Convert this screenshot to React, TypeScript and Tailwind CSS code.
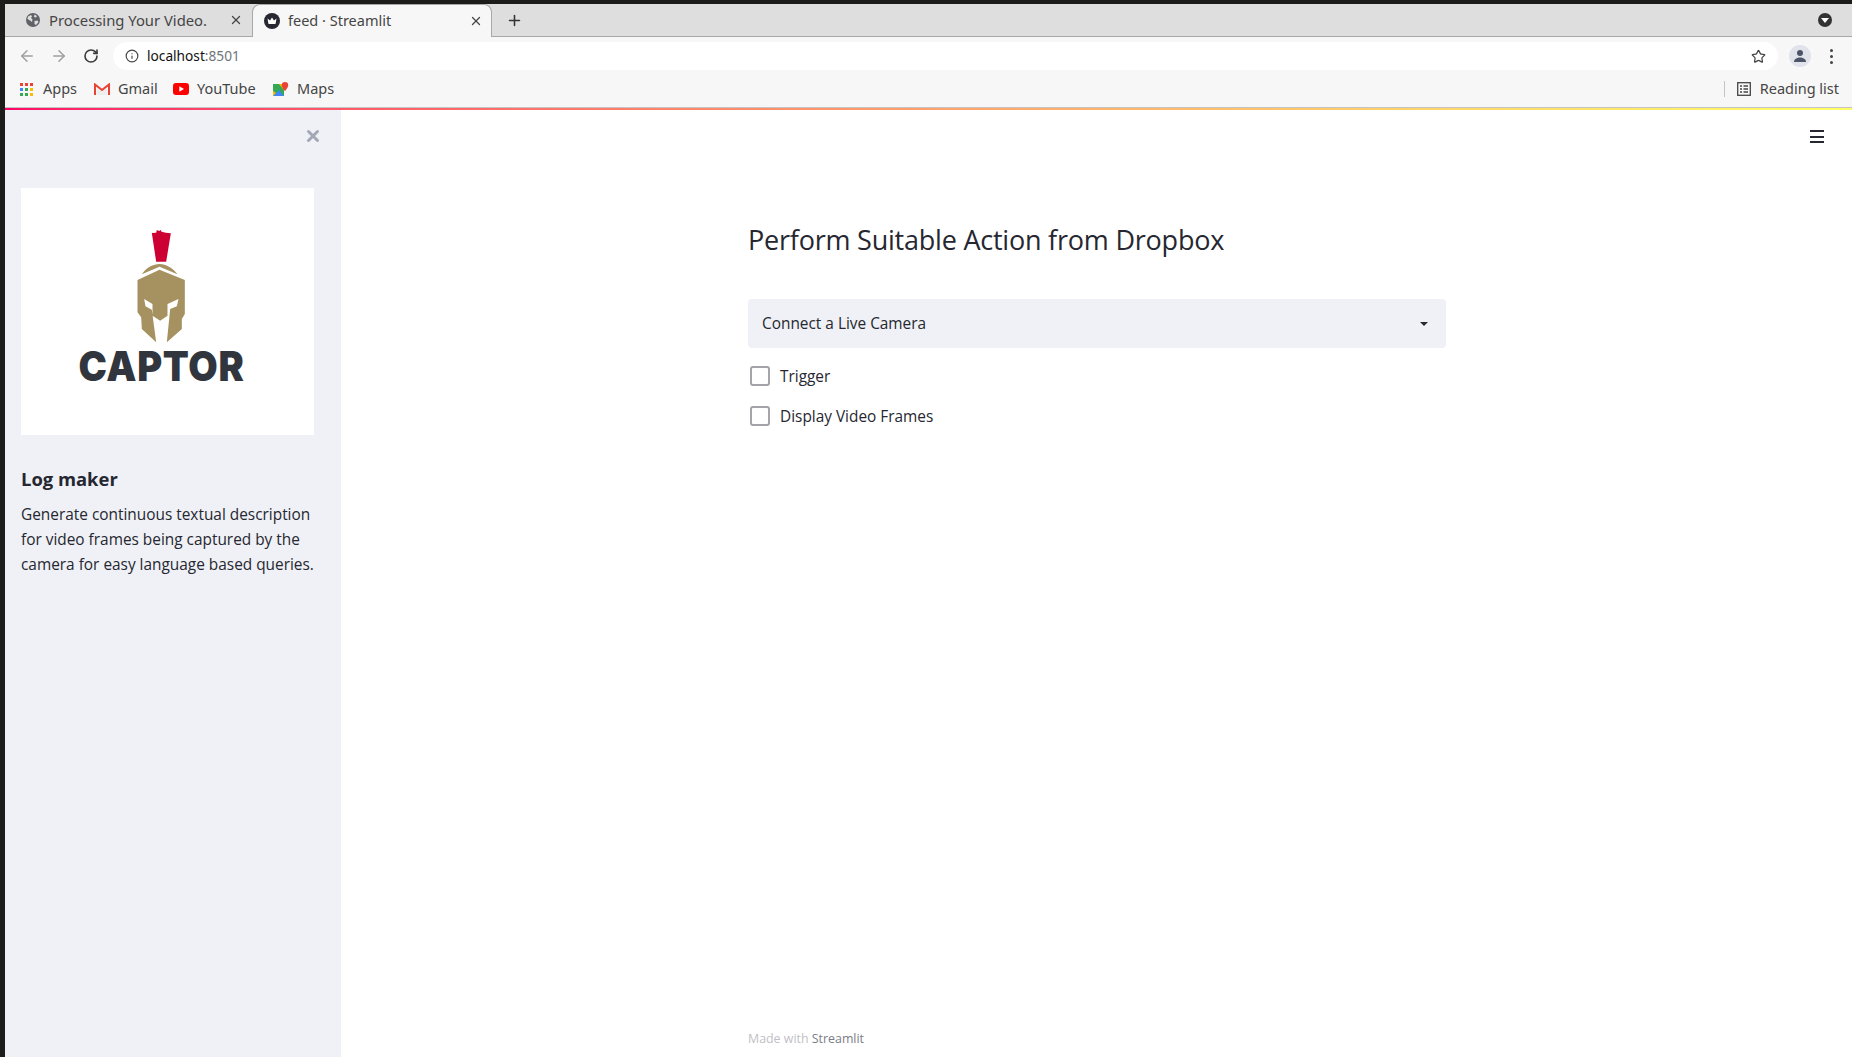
import { ArrowLeft, ArrowRight, Info, Plus, RotateCw, Star, X } from 'lucide-react';

const plex = { fontFamily: '"Open Sans", "Noto Sans", sans-serif' };
const chrome = { fontFamily: '"Noto Sans", sans-serif' };

function Favicon() {
  return (
    <svg width="16" height="16" viewBox="0 0 16 16" className="shrink-0">
      <circle cx="8" cy="8" r="8" fill="#262730" />
      <path d="M3.500 5.500 L6 7.500 L8 4.500 L10 7.500 L12.500 5.500 L11.500 11 H4.500 Z" fill="#fff" />
    </svg>
  );
}

function GlobeIcon() {
  return (
    <svg width="14" height="14" viewBox="0 0 14 14" className="shrink-0">
      <circle cx="7" cy="7" r="7" fill="#5f6368" />
      <path d="M2 3.500 5 2l1 1.500-1 1.500 1.500 1.500L6 9 4 7.500 1.500 6zM8.500 1.500 11 3 10 4.500 8 4zM8.500 8l3-.500 1 1.500-2.500 3L8.500 11z" fill="#dedede" />
    </svg>
  );
}

function AppsIcon() {
  const colors = ['#ea4335', '#ea4335', '#ea4335', '#4285f4', '#34a853', '#fbbc05', '#34a853', '#34a853', '#fbbc05'];
  return (
    <div className="grid h-[13px] w-[13px] shrink-0 grid-cols-3 gap-[2px]">
      {colors.map((c, i) => (
        <div key={i} style={{ backgroundColor: c }} />
      ))}
    </div>
  );
}

function GmailIcon() {
  return (
    <svg width="16" height="13" viewBox="0 0 16 13" className="shrink-0">
      <path d="M3 12V5l5 4 5-4v7z" fill="#eee" />
      <path d="M1 12V1.500L8 7l7-5.500V12" fill="none" stroke="#ea4335" strokeWidth="2" />
    </svg>
  );
}

function YoutubeIcon() {
  return (
    <svg width="16" height="12" viewBox="0 0 16 12" className="shrink-0">
      <rect width="16" height="12" rx="3" fill="#f00" />
      <path d="M6.300 3.200 11 6l-4.700 2.800z" fill="#fff" />
    </svg>
  );
}

function MapsIcon() {
  return (
    <svg width="16" height="15" viewBox="0 0 16 15" className="shrink-0">
      <path d="M0 2h11v12H0z" fill="#34a853" />
      <path d="M0 14 6 8l5 6z" fill="#4285f4" />
      <path d="M0 14V9l3 2z" fill="#fbbc05" />
      <path d="M6 2h5v6z" fill="#fbbc05" />
      <path d="M12 0a3.200 3.200 0 0 1 3.200 3.200C15.200 5.500 12 9 12 9S8.800 5.500 8.800 3.200A3.200 3.200 0 0 1 12 0z" fill="#ea4335" />
    </svg>
  );
}

function Bookmark({ icon, label, className }: { icon: React.ReactNode; label: string; className: string }) {
  return (
    <div className={`flex items-center ${className}`}>
      {icon}
      <span>{label}</span>
    </div>
  );
}

function Check({ label }: { label: string }) {
  return (
    <div className="flex h-5 items-center">
      <div className="ml-[2px] h-5 w-5 rounded-[3px] border-2 border-[#a3a3a8] bg-white" />
      <span className="ml-[10px] mt-[1px] text-[15.4px] text-[#262730]" style={plex}>{label}</span>
    </div>
  );
}

function Logo() {
  return (
    <div className="mt-[43px] flex h-[247px] w-[293px] flex-col items-center bg-white pt-[41px]">
      <svg width="52" height="115" viewBox="225 30 155 345" className="ml-[-13px] shrink-0">
        <path d="M275 42 288 41 290 33 297 36 302 33 304 38 317 41 332 43 318 128 288 128Z" fill="#cc0033" />
        <path d="M245 166C258 145 280 135 298 135C318 135 340 148 352 166L298 143Z" fill="#a69260" />
        <path
          d="M232 183 298 152 374 183 374 285 365 300 365 330 320 370 330 270 350 262 355 240 322 255 322 290 300 305 277 290 277 255 252 240 256 262 275 272 288 370 245 330 243 295 232 280Z"
          fill="#a69260"
        />
      </svg>
      <span
        className="ml-[-12px] mt-[3px] scale-y-[1.08] text-[38px] leading-[38px] font-black tracking-[0.7px] text-[#31363e]"
        style={{ fontFamily: '"Inter", sans-serif' }}
      >
        CAPTOR
      </span>
    </div>
  );
}

export default function App() {
  return (
    <div className="flex h-screen w-full flex-col overflow-hidden bg-[#1c1c1a]">
      <div className="ml-[5px] mt-[4px] flex min-h-0 flex-1 flex-col">
        {/* tabs */}
        <div
          className="flex h-[33px] shrink-0 items-center border-b border-[#a8a8a8] bg-[#dedede] text-[14.5px] text-[#454545]"
          style={chrome}
        >
          <div className="flex h-full w-[247px] items-center pl-[21px]">
            <GlobeIcon />
            <span className="ml-[9px] w-[180px] truncate whitespace-nowrap text-[14.8px]">Processing Your Video.</span>
            <X size={14} className="shrink-0" strokeWidth={2.2} />
          </div>
          <div className="z-10 flex h-[33px] w-[240px] items-center self-start rounded-t-lg border border-b-0 border-[#a8a8a8] bg-[#f7f7f7] pb-[1px] pl-[11px]">
            <Favicon />
            <span className="ml-[8px] w-[181px]">feed · Streamlit</span>
            <X size={14} className="shrink-0" strokeWidth={2.2} />
          </div>
          <Plus size={17} className="ml-[14px] text-[#333]" strokeWidth={2.2} />
          <div className="ml-auto mr-[20px] flex h-[14px] w-[14px] items-center justify-center rounded-full bg-[#333]">
            <div className="h-0 w-0 border-x-[4px] border-t-[5px] border-x-transparent border-t-white" />
          </div>
        </div>

        {/* toolbar */}
        <div className="h-[34px] shrink-0 bg-[#f7f7f7] pt-[5px]">
          <div className="flex h-[28px] items-center">
            <ArrowLeft size={18} className="ml-[13px] text-[#a0a0a0]" strokeWidth={2} />
            <ArrowRight size={18} className="ml-[14px] text-[#a0a0a0]" strokeWidth={2} />
            <RotateCw size={16} className="ml-[15px] text-[#3a3a3a]" strokeWidth={2.4} />
            <div className="ml-[14px] flex h-[28px] flex-1 items-center rounded-full bg-white pl-[12px] pr-[12px]">
              <Info size={14} className="text-[#454545]" strokeWidth={2} />
              <span className="ml-[8px] text-[13.7px]" style={chrome}>
                <span className="text-[#111]">localhost</span>
                <span className="text-[#6f7378]">:8501</span>
              </span>
              <Star size={15} className="ml-auto text-[#454545]" strokeWidth={2} />
            </div>
            <div className="ml-[11px] flex h-[22px] w-[22px] items-center justify-center rounded-full bg-[#e1e3ea]">
              <svg width="14" height="14" viewBox="0 0 14 14">
                <circle cx="7" cy="4" r="3" fill="#4c5468" />
                <path d="M1 13c0-3 3-4.500 6-4.500S13 10 13 13z" fill="#4c5468" />
              </svg>
            </div>
            <div className="ml-[19px] mr-[19px] flex flex-col gap-[3px]">
              <div className="h-[3px] w-[3px] rounded-full bg-[#454545]" />
              <div className="h-[3px] w-[3px] rounded-full bg-[#454545]" />
              <div className="h-[3px] w-[3px] rounded-full bg-[#454545]" />
            </div>
          </div>
        </div>

        {/* bookmarks */}
        <div
          className="flex h-[37px] shrink-0 items-center border-b border-[#c4c4c4] bg-[#f7f7f7] pl-[15px] text-[14.5px] text-[#454545]"
          style={chrome}
        >
          <Bookmark icon={<AppsIcon />} label="Apps" className="w-[74px] gap-[10px]" />
          <Bookmark icon={<GmailIcon />} label="Gmail" className="w-[79px] gap-[8px]" />
          <Bookmark icon={<YoutubeIcon />} label="YouTube" className="w-[100px] gap-[8px]" />
          <Bookmark icon={<MapsIcon />} label="Maps" className="gap-[8px]" />
          <div className="ml-auto mr-[12px] h-[16px] w-px bg-[#c4c4c4]" />
          <svg width="14" height="14" viewBox="0 0 14 14" className="shrink-0" fill="none" stroke="#454545" strokeWidth="1.300">
            <rect x=".7" y=".7" width="12.600" height="12.600" />
            <path d="M3 4h2M3 7h2M3 10h2M6.500 4H11M6.500 7H11M6.500 10H11" />
          </svg>
          <span className="ml-[9px] mr-[13px] whitespace-nowrap">Reading list</span>
        </div>

        {/* gradient decoration */}
        <div className="h-[2px] shrink-0 bg-gradient-to-r from-[#ff0066] to-[#ffff66]" />

        <div className="flex min-h-0 flex-1">
          {/* sidebar */}
          <aside className="flex w-[336px] shrink-0 flex-col bg-[#eff1f6] pl-[16px]">
            <div className="flex justify-end pr-[19px] pt-[17px]">
              <X size={18} strokeWidth={4} className="text-[#a3a8b4]" />
            </div>
            <Logo />
            <h2 className="mt-[31px] text-[18.4px] leading-[26px] font-bold text-[#262730]" style={plex}>
              Log maker
            </h2>
            <p className="mt-[10px] w-[300px] text-[15.4px] leading-[25px] text-[#262730]" style={plex}>
              Generate continuous textual description
              <br />
              for video frames being captured by the
              <br />
              camera for easy language based queries.
            </p>
          </aside>

          {/* main */}
          <main className="relative flex min-w-0 flex-1 flex-col bg-white">
            <div className="flex justify-end pr-[28px] pt-[20px]">
              <div className="flex h-[13px] w-[14px] flex-col justify-between">
                <div className="h-[2px] bg-[#262730]" />
                <div className="h-[2px] bg-[#262730]" />
                <div className="h-[2px] bg-[#262730]" />
              </div>
            </div>
            <div className="flex min-h-0 flex-1 flex-col pl-[407px]">
              <h1 className="mt-[78px] text-[27px] leading-[38px] tracking-[-0.22px] text-[#262730]" style={plex}>
                Perform Suitable Action from Dropbox
              </h1>
              <div className="mt-[40px] flex h-[49px] w-[698px] items-center justify-between rounded-[4px] bg-[#eff1f6] pl-[14px] pr-[18px]">
                <span className="text-[15.4px] text-[#262730]" style={plex}>Connect a Live Camera</span>
                <div className="h-0 w-0 border-x-[4px] border-t-[4px] border-x-transparent border-t-[#262730]" />
              </div>
              <div className="mt-[18px] flex flex-col gap-[20px]">
                <Check label="Trigger" />
                <Check label="Display Video Frames" />
              </div>
              <div className="mb-[9px] mt-auto text-[12.4px] leading-[18px] text-[#bfbfc6]" style={plex}>
                Made with <span className="text-[#7a7d88]">Streamlit</span>
              </div>
            </div>
          </main>
        </div>
      </div>
    </div>
  );
}
